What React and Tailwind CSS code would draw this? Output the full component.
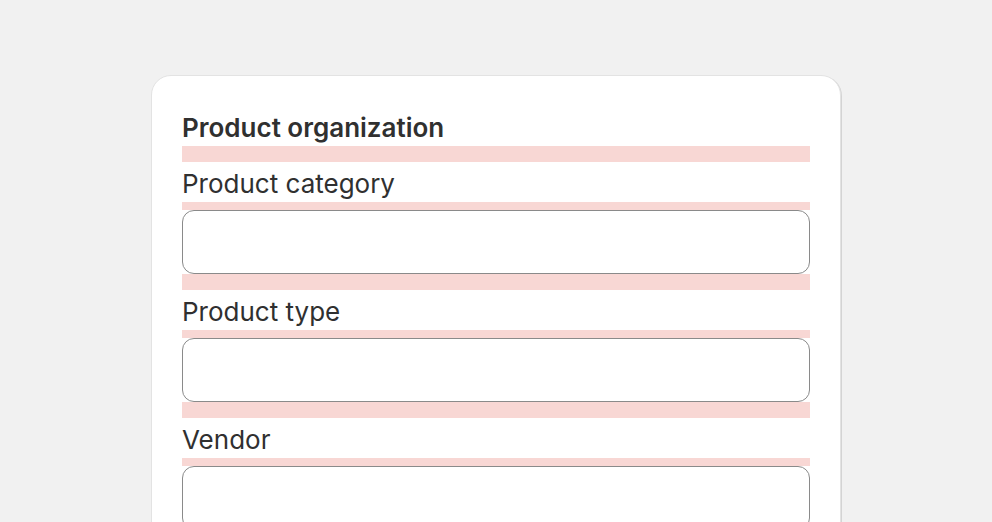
import React from 'react';

const fields = ['Product category', 'Product type', 'Vendor'];

const App = () => {
  return (
    <div className="min-h-screen bg-[#f1f1f1] pt-[75px] font-[Inter,'Noto_Sans',sans-serif] text-[#303030]">
      <div className="mx-auto w-[690px] rounded-[20px] border border-[#e3e3e3] bg-white px-[30px] pt-[30px] pb-[30px] shadow-[1px_1px_0_#d4d4d4]">
        <h2 className="pt-[3px] text-[26px] font-semibold leading-[37px]">Product organization</h2>
        <div className="h-4 bg-[#f8d7d4]" />
        {fields.map((label, i) => (
          <div key={label}>
            <label className="block pt-[3px] text-[26px] leading-[37px]">{label}</label>
            <div className="h-2 bg-[#f8d7d4]" />
            <input
              type="text"
              className="block h-16 w-full rounded-xl border border-[#8a8a8a] bg-white px-3 outline-none"
            />
            {i < fields.length - 1 && <div className="h-4 bg-[#f8d7d4]" />}
          </div>
        ))}
      </div>
    </div>
  );
};

export default App;
